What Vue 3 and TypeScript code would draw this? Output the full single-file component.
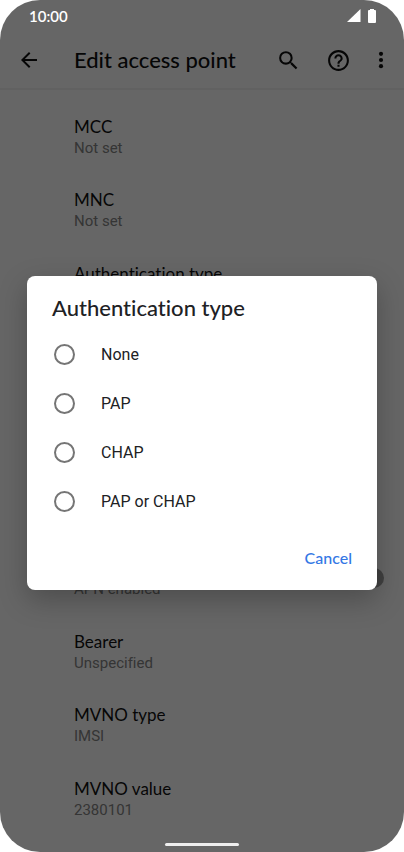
<script setup lang="ts">
import { ref } from 'vue'

interface Setting {
  title?: string
  value?: string
  toggle?: boolean
  tall?: boolean
}

const settings: Setting[] = [
  { title: 'MCC', value: 'Not set' },
  { title: 'MNC', value: 'Not set' },
  { title: 'Authentication type' },
  { value: 'APN enabled', toggle: true, tall: true },
  { title: 'Bearer', value: 'Unspecified' },
  { title: 'MVNO type', value: 'IMSI' },
  { title: 'MVNO value', value: '2380101' },
]

const options: string[] = ['None', 'PAP', 'CHAP', 'PAP or CHAP']
const selected = ref<string>('')
const dialogOpen = ref(true)
</script>

<template>
  <div class="screen">
    <header class="app-bar">
      <button class="icon-button" type="button" aria-label="Back">
        <svg width="24" height="24" viewBox="0 0 24 24"><path d="M20 11H7.83l5.59-5.59L12 4l-8 8 8 8 1.41-1.41L7.83 13H20v-2z" /></svg>
      </button>
      <h1 class="app-title">Edit access point</h1>
      <div class="actions">
        <button class="icon-button" type="button" aria-label="Search">
          <svg width="25" height="25" viewBox="0 0 24 24"><path d="M15.5 14h-.79l-.28-.27A6.47 6.47 0 0 0 16 9.5 6.5 6.5 0 1 0 9.5 16c1.61 0 3.09-.59 4.23-1.57l.27.28v.79l5 4.99L20.49 19l-4.99-5zm-6 0C7.01 14 5 11.99 5 9.5S7.01 5 9.5 5 14 7.01 14 9.5 11.99 14 9.5 14z" /></svg>
        </button>
        <button class="icon-button" type="button" aria-label="Help">
          <svg width="25" height="25" viewBox="0 0 24 24"><path d="M11 18h2v-2h-2v2zm1-16C6.48 2 2 6.48 2 12s4.48 10 10 10 10-4.48 10-10S17.52 2 12 2zm0 18c-4.41 0-8-3.59-8-8s3.59-8 8-8 8 3.59 8 8-3.59 8-8 8zm0-14c-2.21 0-4 1.79-4 4h2c0-1.1.9-2 2-2s2 .9 2 2c0 2-3 1.75-3 5h2c0-2.25 3-2.5 3-5 0-2.21-1.79-4-4-4z" /></svg>
        </button>
        <button class="icon-button more" type="button" aria-label="More options">
          <svg width="24" height="24" viewBox="0 0 24 24"><circle cx="12" cy="5.8" r="2.1" /><circle cx="12" cy="12" r="2.1" /><circle cx="12" cy="18.2" r="2.1" /></svg>
        </button>
      </div>
    </header>

    <main class="settings">
      <div v-for="(item, index) in settings" :key="index" class="setting" :class="{ tall: item.tall }">
        <div>
          <div class="setting-title">{{ item.title }}</div>
          <div class="setting-value">{{ item.value }}</div>
        </div>
        <span v-if="item.toggle" class="switch"></span>
      </div>
    </main>

    <div v-if="dialogOpen" class="scrim">
      <section class="dialog" role="dialog" aria-labelledby="dialog-title">
        <h2 id="dialog-title" class="dialog-title">Authentication type</h2>
        <label v-for="option in options" :key="option" class="option">
          <input v-model="selected" class="radio" type="radio" name="auth-type" :value="option" />
          <span>{{ option }}</span>
        </label>
        <button class="cancel" type="button" @click="dialogOpen = false">Cancel</button>
      </section>
    </div>

    <div class="status-bar">
      <span>10:00</span>
      <div class="status-icons">
        <svg width="14" height="14" viewBox="0 0 14 14"><path d="M13.5 0v13H0z" /></svg>
        <svg width="8" height="14" viewBox="0 0 8 14"><path d="M2 0h4v1h1a1 1 0 0 1 1 1v11a1 1 0 0 1-1 1H1a1 1 0 0 1-1-1V2a1 1 0 0 1 1-1h1z" /></svg>
      </div>
    </div>
    <div class="nav-handle"></div>
  </div>
</template>

<style>
body {
  background: #fff;
}
</style>

<style scoped>
.screen {
  position: relative;
  display: flex;
  flex-direction: column;
  box-sizing: border-box;
  min-height: 100vh;
  overflow: hidden;
  border-radius: 40px;
  background: #fff;
  color: #111;
  font-family: Lato, "Open Sans", sans-serif;
  font-variant-ligatures: none;
}

h1,
h2 {
  margin: 0;
  font-weight: 500;
}

button {
  padding: 0;
  border: 0;
  background: none;
  color: inherit;
  font-family: inherit;
  cursor: pointer;
}

.app-bar {
  display: flex;
  align-items: center;
  box-sizing: border-box;
  height: 90px;
  padding: 32px 11px 0 17px;
  border-bottom: 2px solid #f2f2f2;
}

.icon-button {
  display: flex;
  align-items: center;
  justify-content: center;
}

.icon-button svg {
  fill: #111;
}

.app-title {
  flex: 1;
  margin-left: 33px;
  font-size: 22px;
  line-height: 28px;
  white-space: nowrap;
}

.actions {
  display: flex;
  align-items: center;
  gap: 25px;
}

.more {
  margin-left: -7px;
}

.settings {
  display: grid;
  flex: 1;
  grid-auto-rows: 1fr;
  padding: 11px 20px 15px 74px;
}

.setting {
  display: flex;
  align-items: flex-end;
  justify-content: space-between;
  padding-bottom: 17px;
}

.tall {
  grid-row: span 4;
}

.setting-title {
  min-height: 22px;
  font-size: 17px;
  line-height: 22px;
}

.setting-value {
  min-height: 20px;
  color: #858585;
  font-family: Roboto, sans-serif;
  font-size: 15px;
  line-height: 20px;
}

.switch {
  width: 20px;
  height: 20px;
  margin-bottom: 11px;
  border-radius: 50%;
  background: #a0a0a0;
}

.scrim {
  position: absolute;
  inset: 0;
  display: flex;
  align-items: center;
  padding: 14px 27px 0;
  background: rgba(0, 0, 0, 0.6);
}

.dialog {
  display: flex;
  flex: 1;
  flex-direction: column;
  padding: 18px 25px 16px;
  border-radius: 8px;
  background: #fff;
  box-shadow: 0 10px 28px rgba(0, 0, 0, 0.25);
  color: #202124;
}

.dialog-title {
  margin-bottom: 8px;
  font-size: 22px;
  line-height: 28px;
}

.option {
  display: flex;
  align-items: center;
  gap: 26px;
  height: 49px;
  padding-left: 2px;
  font-family: Roboto, sans-serif;
  font-size: 16px;
}

.radio {
  box-sizing: border-box;
  width: 21px;
  height: 21px;
  margin: 0;
  border: 2px solid #757575;
  border-radius: 50%;
  appearance: none;
}

.radio:checked {
  border-color: #3478e5;
  background: radial-gradient(#3478e5 5px, transparent 6px);
}

.cancel {
  align-self: flex-end;
  margin-top: 16px;
  color: #3478e5;
  font-size: 16px;
  font-weight: 500;
  line-height: 32px;
}

.status-bar {
  position: absolute;
  inset: 0 0 auto;
  display: flex;
  align-items: center;
  justify-content: space-between;
  height: 32px;
  padding: 0 28px 0 29px;
  color: #fff;
  font-size: 15px;
  font-weight: 600;
}

.status-icons {
  display: flex;
  gap: 7px;
  fill: #fff;
}

.nav-handle {
  position: absolute;
  bottom: 6px;
  left: 50%;
  width: 74px;
  height: 3px;
  margin-left: -37px;
  border-radius: 2px;
  background: #eee;
}
</style>
